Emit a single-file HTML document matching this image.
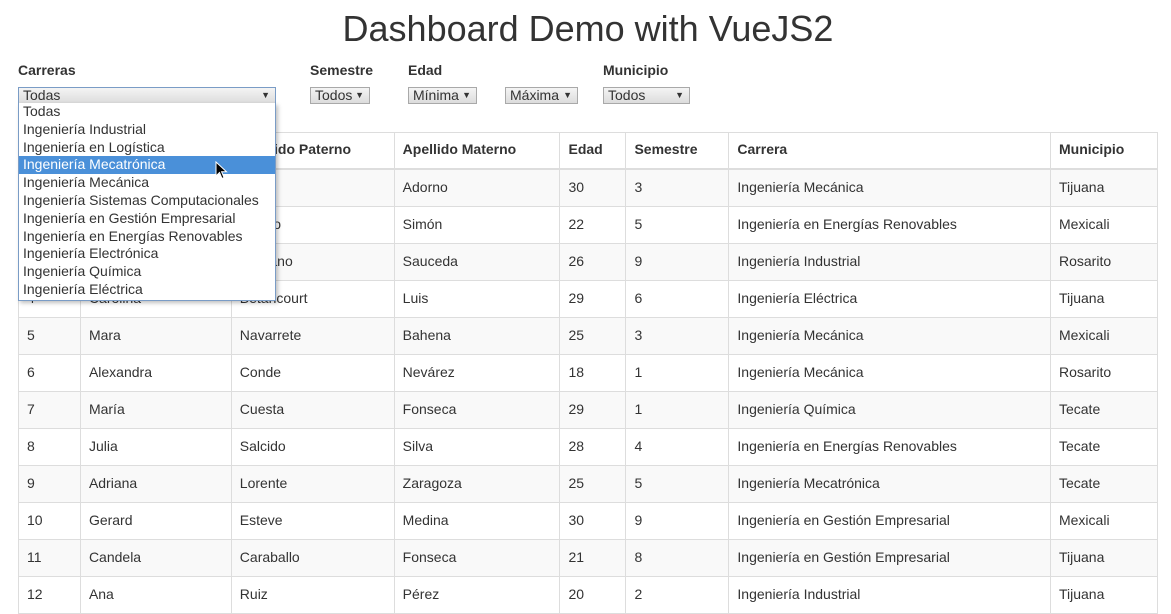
<!DOCTYPE html>
<html><head><meta charset="utf-8"><style>
body{margin:0;background:#fff;font-family:"Liberation Sans",sans-serif;color:#333;width:1171px;height:583px;overflow:hidden;position:relative;font-size:14px}
h1{position:absolute;left:0;width:1176px;top:8px;margin:0;text-align:center;font-weight:normal;font-size:36px;line-height:42px;color:#333}
.lbl{position:absolute;top:62px;font-weight:bold;font-size:14px}
.sel{position:absolute;top:87px;height:15px;border:1px solid #a9a9a9;background:linear-gradient(#f4f4f4,#dcdcdc);font-size:14px;line-height:15px;padding-left:4px;box-sizing:content-box;color:#333}
.sel:after{content:"▼";position:absolute;right:5px;top:0;font-size:9px}
table{position:absolute;left:18px;top:132px;border-collapse:collapse;width:1140px}
td,th{border:1px solid #ddd;padding:0 8px;text-align:left;height:36px;font-size:14px}
td{padding-bottom:2px;height:34px}
th{height:31px;padding-bottom:4px;border-bottom:2px solid #ddd}
tbody tr:nth-child(odd){background:#f9f9f9}
.dd{position:absolute;left:18px;top:103px;width:256px;height:197px;border:1px solid #7a9cc6;border-top:none;background:#fff;box-shadow:2px 2px 4px rgba(0,0,0,.25);font-size:14px}
.dd div{height:17.8px;line-height:17px;padding-left:4px;color:#333}
.dd .h{background:#4a90d9;color:#fff}
</style></head><body>
<h1>Dashboard Demo with VueJS2</h1>
<div class="lbl" style="left:18px">Carreras</div>
<div class="lbl" style="left:310px">Semestre</div>
<div class="lbl" style="left:408px">Edad</div>
<div class="lbl" style="left:603px">Municipio</div>
<div class="sel" style="left:18px;width:252px;border-color:#7a9cc6">Todas</div>
<div class="sel" style="left:310px;width:54px">Todos</div>
<div class="sel" style="left:408px;width:63px">Mínima</div>
<div class="sel" style="left:505px;width:67px">Máxima</div>
<div class="sel" style="left:603px;width:81px">Todos</div>
<table>
<colgroup><col style="width:62px"><col style="width:151px"><col style="width:163px"><col style="width:166px"><col style="width:66px"><col style="width:103px"><col style="width:322px"><col style="width:107px"></colgroup>
<thead><tr><th>#</th><th>Nombre</th><th>Apellido Paterno</th><th>Apellido Materno</th><th>Edad</th><th>Semestre</th><th>Carrera</th><th>Municipio</th></tr></thead>
<tbody>
<tr><td>1</td><td>Sofía</td><td>Lara</td><td>Adorno</td><td>30</td><td>3</td><td>Ingeniería Mecánica</td><td>Tijuana</td></tr>
<tr><td>2</td><td>Lucía</td><td>Toledo</td><td>Simón</td><td>22</td><td>5</td><td>Ingeniería en Energías Renovables</td><td>Mexicali</td></tr>
<tr><td>3</td><td>Paula</td><td>Galbano</td><td>Sauceda</td><td>26</td><td>9</td><td>Ingeniería Industrial</td><td>Rosarito</td></tr>
<tr><td>4</td><td>Carolina</td><td>Betancourt</td><td>Luis</td><td>29</td><td>6</td><td>Ingeniería Eléctrica</td><td>Tijuana</td></tr>
<tr><td>5</td><td>Mara</td><td>Navarrete</td><td>Bahena</td><td>25</td><td>3</td><td>Ingeniería Mecánica</td><td>Mexicali</td></tr>
<tr><td>6</td><td>Alexandra</td><td>Conde</td><td>Nevárez</td><td>18</td><td>1</td><td>Ingeniería Mecánica</td><td>Rosarito</td></tr>
<tr><td>7</td><td>María</td><td>Cuesta</td><td>Fonseca</td><td>29</td><td>1</td><td>Ingeniería Química</td><td>Tecate</td></tr>
<tr><td>8</td><td>Julia</td><td>Salcido</td><td>Silva</td><td>28</td><td>4</td><td>Ingeniería en Energías Renovables</td><td>Tecate</td></tr>
<tr><td>9</td><td>Adriana</td><td>Lorente</td><td>Zaragoza</td><td>25</td><td>5</td><td>Ingeniería Mecatrónica</td><td>Tecate</td></tr>
<tr><td>10</td><td>Gerard</td><td>Esteve</td><td>Medina</td><td>30</td><td>9</td><td>Ingeniería en Gestión Empresarial</td><td>Mexicali</td></tr>
<tr><td>11</td><td>Candela</td><td>Caraballo</td><td>Fonseca</td><td>21</td><td>8</td><td>Ingeniería en Gestión Empresarial</td><td>Tijuana</td></tr>
<tr><td>12</td><td>Ana</td><td>Ruiz</td><td>Pérez</td><td>20</td><td>2</td><td>Ingeniería Industrial</td><td>Tijuana</td></tr>
</tbody></table>
<div class="dd">
<div>Todas</div><div>Ingeniería Industrial</div><div>Ingeniería en Logística</div><div class="h">Ingeniería Mecatrónica</div><div>Ingeniería Mecánica</div><div>Ingeniería Sistemas Computacionales</div><div>Ingeniería en Gestión Empresarial</div><div>Ingeniería en Energías Renovables</div><div>Ingeniería Electrónica</div><div>Ingeniería Química</div><div>Ingeniería Eléctrica</div>
</div>
<svg style="position:absolute;left:215px;top:161px" width="14" height="20" viewBox="0 0 14 20"><path d="M1 1 L1 15 L4.5 11.5 L7 17.5 L9 16.6 L6.6 10.8 L11.5 10.8 Z" fill="#000" stroke="#fff" stroke-width="1"/></svg>
</body></html>
